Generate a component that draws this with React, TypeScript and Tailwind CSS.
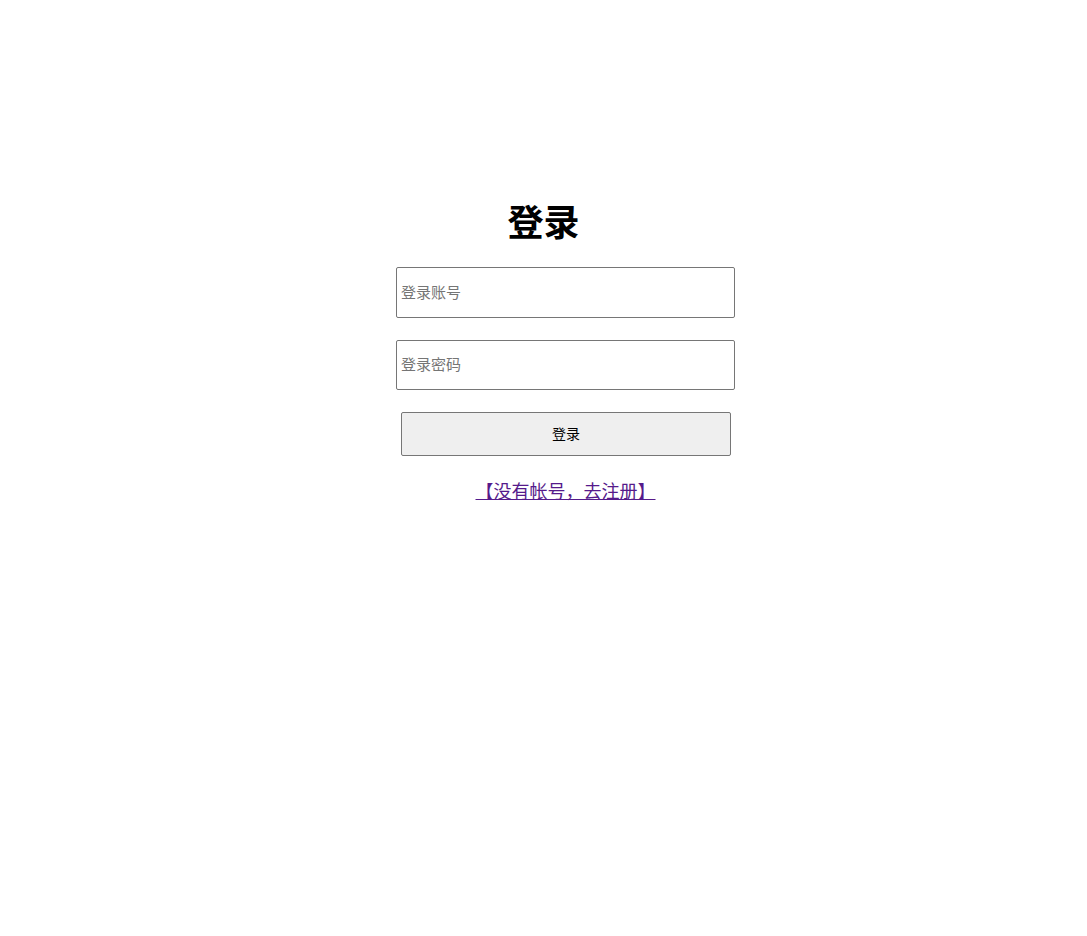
import React from "react";

export default function App() {
  return (
    <div
      className="flex min-h-[936px] flex-col items-center bg-white pt-[195px]"
      style={{ fontFamily: '"Microsoft YaHei", "Noto Sans CJK SC", sans-serif' }}
    >
      <h1 className="h-[50px] text-[36px] font-bold leading-[50px] text-black">登录</h1>
      <div className="ml-[44px] mt-[22px] flex w-[339px] flex-col">
        <input
          type="text"
          placeholder="登录账号"
          className="h-[51px] rounded-[2px] border border-[#767676] px-[4px] pb-[3px] text-[15px] text-black placeholder-[#757575] outline-none"
        />
        <input
          type="password"
          placeholder="登录密码"
          className="mt-[22px] h-[50px] rounded-[2px] border border-[#767676] px-[4px] pb-[3px] text-[15px] text-black placeholder-[#757575] outline-none"
        />
        <button className="mx-[5px] mt-[22px] h-[44px] w-[330px] rounded-[2px] border border-[#767676] bg-[#efefef] pb-[1px] text-[14px] text-black">
          登录
        </button>
        <div className="mt-[21px] text-center leading-[26px]">
          <a href="#" className="text-[18px] text-[#551a8b] underline">
            【没有帐号，去注册】
          </a>
        </div>
      </div>
    </div>
  );
}
